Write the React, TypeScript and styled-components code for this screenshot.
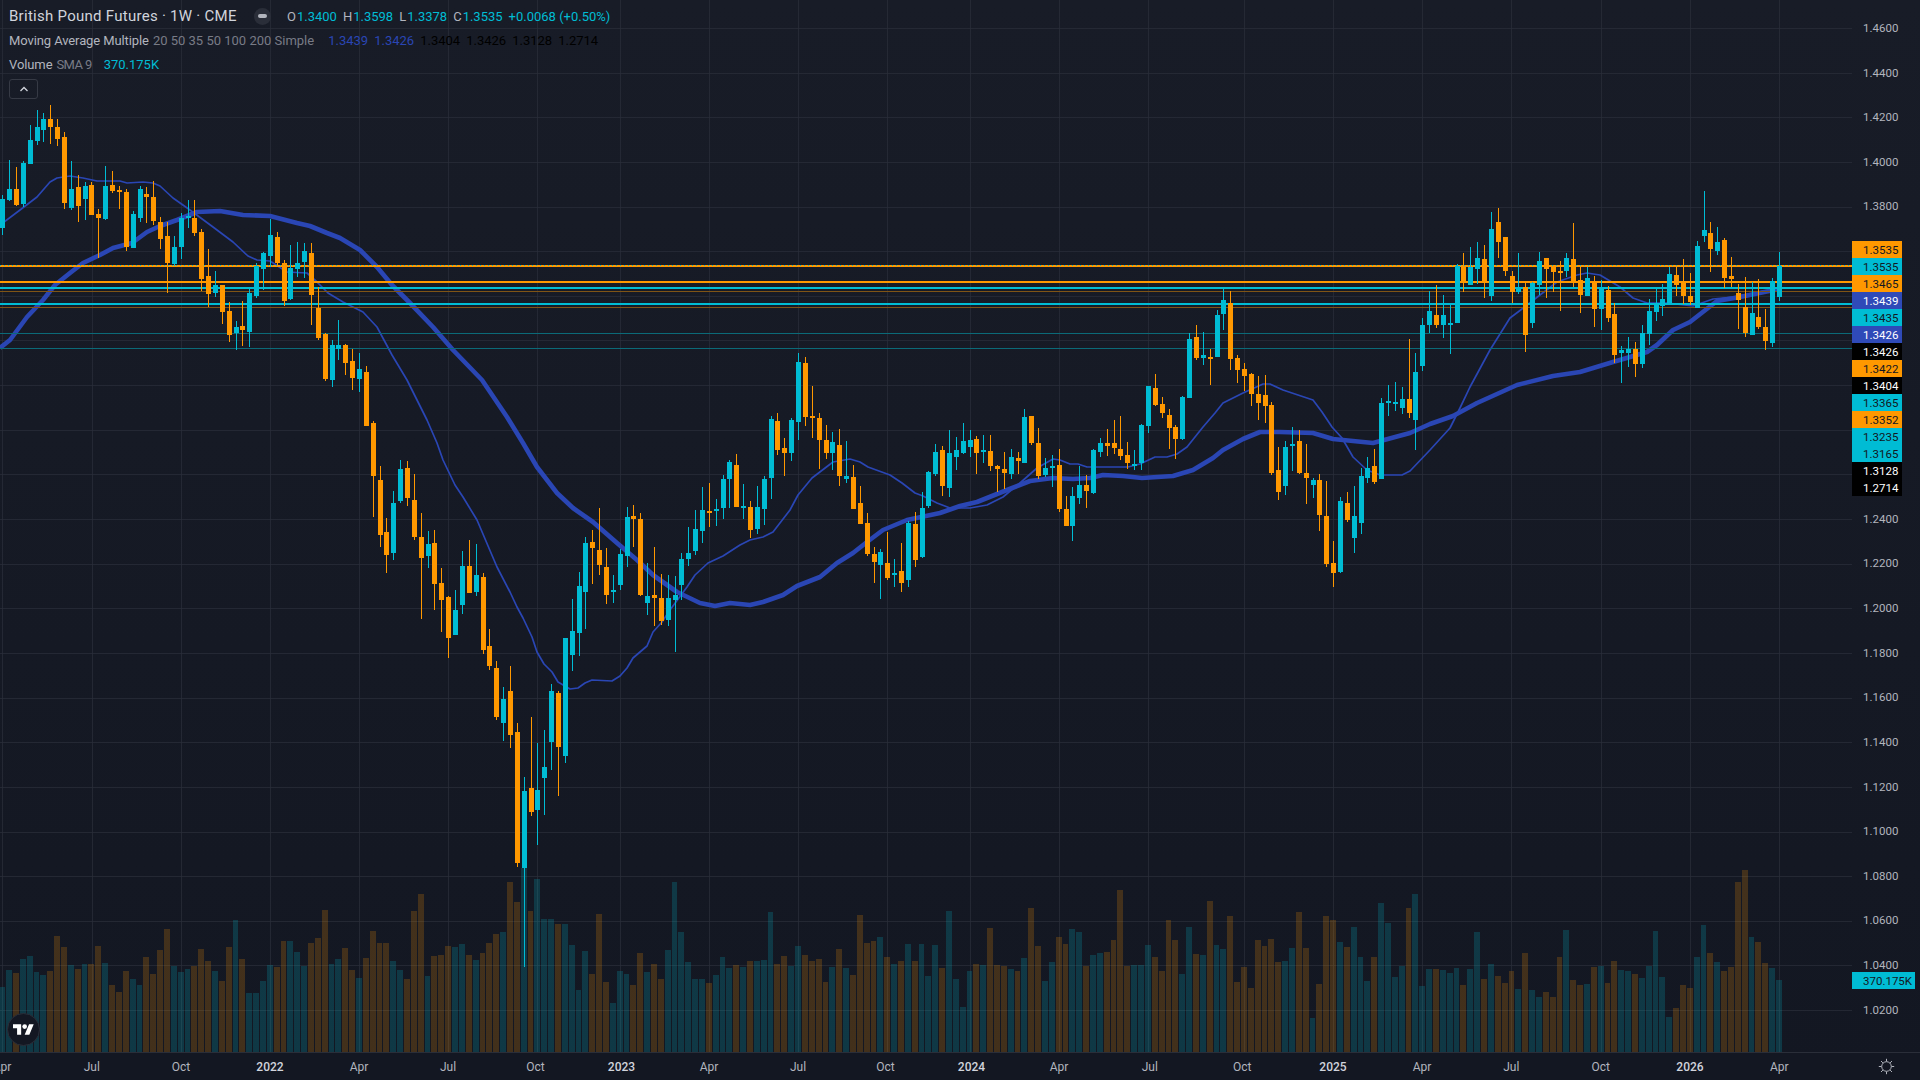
import styled, { createGlobalStyle } from "styled-components";

const CYAN = "#00bcd4";
const ORANGE = "#ff9800";
const BLUE = "#2a46b4";

type Row = [number, number, number, number, number];

// candle values read as pixels at 3x, y0 is where that crop starts
const seg = (y0: number, rows: Row[]) =>
  rows.map(([h, t, b, l, up]) => ({
    high: y0 + h / 3,
    top: y0 + t / 3,
    bottom: y0 + b / 3,
    low: y0 + l / 3,
    up: up === 1,
  }));

const candles = [
  ...seg(100, [
    [285,297,384,405,1],[180,267,300,304,1],[201,267,315,318,0],[183,189,312,320,1],[75,120,192,192,1],
    [30,81,123,135,1],[39,57,90,126,1],[15,57,81,132,0],[57,81,117,138,0],[96,111,309,326,0],
    [183,267,324,330,1],[225,261,318,366,0],[246,258,297,360,1],[246,255,345,345,0],[327,342,354,474,0],
    [198,258,357,360,1],[213,255,273,279,0],[258,270,276,327,0],[267,276,441,453,0],[333,342,444,444,1],
    [258,267,354,366,1],[261,282,291,369,0],[243,291,363,375,0],[351,366,417,447,0],[366,408,489,579,0],
    [408,441,492,498,1],[339,354,441,477,1],[300,348,354,384,1],[300,354,399,408,0],[387,396,537,573,0],
    [447,528,582,621,0],[513,555,579,591,1],[555,555,636,672,0],[606,633,705,726,0],[663,681,699,750,1],
    [603,678,690,738,0],[567,579,696,741,1],[489,498,588,594,1],[456,459,507,570,1],[357,405,468,501,1],
    [396,411,489,495,0],[480,489,603,618,0],[435,504,597,600,1],[426,489,507,531,1],[429,453,486,534,1],
    [429,459,585,675,0],[561,624,714,720,0],[699,702,837,843,0],[720,735,840,861,1],[660,735,747,780,1],
    [732,735,789,825,0],[747,783,834,870,0],[759,807,837,876,1],[798,816,978,978,0],
  ]),
  ...seg(380, [
    [123,129,288,411,0],[258,300,465,501,0],[414,456,525,579,0],[333,369,519,540,1],[240,267,363,369,1],
    [243,264,354,378,0],[282,360,471,480,0],[399,471,534,717,0],[453,492,528,564,1],[450,489,612,690,0],
    [564,609,660,756,0],[648,651,774,834,0],[630,690,765,765,1],[513,558,675,702,1],[480,558,639,639,0],
    [492,585,636,648,1],[579,591,810,822,0],[747,798,858,870,0],[843,864,1011,1020,0],
  ]),
  ...seg(660, [
    [81,117,189,243,1],[18,93,225,264,0],[189,216,609,621,0],[351,393,624,921,1],[171,384,456,468,0],
    [249,390,450,555,1],[210,321,354,465,1],[72,93,246,330,1],[93,99,261,408,0],[-66,-66,288,309,1],
  ]),
  ...seg(380, [
    [657,753,825,873,1],[576,618,759,828,1],[471,489,636,747,1],[450,486,504,612,0],[384,510,555,585,0],
    [504,561,645,672,0],[585,630,636,669,1],[507,522,615,630,1],[381,411,528,561,1],[375,408,417,501,0],
    [399,417,645,648,0],[549,648,669,705,1],[501,645,654,738,0],[582,654,723,735,0],[585,654,720,738,1],
    [588,645,660,816,1],[519,537,615,660,1],[441,519,537,558,1],[390,447,513,525,1],[321,390,453,489,1],
    [309,393,399,441,0],[357,387,393,438,1],[285,297,384,417,1],[240,246,297,384,1],[222,255,381,381,0],
    [312,378,384,417,1],[363,381,450,474,0],[318,381,447,462,1],
  ]),
  ...seg(340, [
    [408,417,507,555,1],[228,237,414,477,1],[219,243,330,345,0],[294,324,339,408,0],[234,240,339,363,1],
    [39,66,246,300,1],[51,69,231,258,0],[138,228,231,294,0],[219,234,300,387,0],[255,300,339,357,0],
    [276,306,339,390,1],[267,315,408,438,0],[303,408,417,429,1],[375,411,507,507,0],[438,489,552,552,0],
    [519,549,642,648,0],[621,642,666,729,0],[627,636,675,777,1],[576,669,714,720,0],[657,699,705,741,1],
    [609,693,729,756,0],[543,549,720,741,1],[516,552,660,681,0],[456,504,651,654,1],[393,396,498,504,1],
    [312,336,402,408,1],[318,330,438,468,0],[270,339,444,471,1],[291,330,351,390,1],[249,303,339,342,1],
    [270,300,321,351,1],[288,297,339,402,0],[285,330,336,369,1],[285,333,378,393,0],[375,378,387,456,0],
    [336,387,399,447,0],[327,351,402,417,1],[336,354,363,402,0],[207,231,369,369,1],[228,228,309,315,0],
    [264,309,408,417,0],[354,384,405,411,1],[345,378,381,441,1],[327,375,507,516,0],[468,507,558,558,0],
    [441,468,558,603,1],[378,435,474,492,1],[405,435,453,504,0],[327,330,459,462,1],[294,309,336,351,1],
    [267,309,318,348,0],[240,309,324,342,0],[228,327,348,360,0],[306,345,369,387,0],[330,372,375,390,1],
    [252,255,369,390,1],[138,138,258,279,1],[102,144,195,198,0],[171,192,219,234,0],[207,225,264,327,0],
    [255,261,297,357,0],[168,171,297,300,1],
  ]),
  ...seg(280, [
    [159,177,354,354,1],[135,171,234,240,0],[156,225,234,255,1],[207,231,237,315,0],[90,105,231,231,1],
    [27,60,102,150,1],[33,69,237,270,0],[225,234,270,309,0],[249,267,288,333,0],[279,282,342,378,0],
    [288,342,369,420,0],[285,345,378,429,0],[366,375,579,585,0],[501,570,636,660,0],[483,501,618,645,1],
    [441,492,498,573,1],[450,483,579,582,0],[492,579,594,672,0],[594,600,615,654,1],[582,600,705,753,0],
    [603,708,852,861,0],[783,849,879,921,0],[651,663,876,879,1],[636,669,720,726,0],[618,708,774,819,1],
    [564,588,729,762,1],[531,564,594,609,1],[507,558,606,612,0],[354,369,597,597,1],[315,363,369,408,1],
    [306,366,369,393,1],[321,357,384,402,1],[177,357,399,414,0],[219,276,420,510,1],
  ]),
  ...seg(180, [
    [414,435,558,573,1],[333,393,435,459,1],[315,405,435,444,0],[345,405,435,474,1],[375,429,432,522,1],
    [252,258,429,429,1],[219,258,306,336,0],[201,261,315,315,1],[186,234,267,312,1],[195,237,306,354,0],
    [96,147,348,363,1],[84,126,186,234,0],[171,171,273,288,0],[273,288,336,369,0],[219,321,336,342,1],
    [309,321,465,516,0],[306,309,429,444,1],[216,243,315,345,1],[234,234,267,354,0],[261,261,276,336,0],
    [243,273,279,393,0],[219,234,273,291,1],[129,237,306,321,0],[258,300,345,399,0],[261,294,348,348,1],
    [288,306,387,441,0],[300,321,387,450,1],[318,330,414,426,0],[369,402,525,549,0],[498,510,519,609,1],
    [471,507,519,561,1],[486,507,552,591,0],[435,459,552,564,1],[357,393,462,495,1],[324,372,396,423,1],
    [312,357,378,408,1],[261,282,369,375,1],[261,285,315,348,0],[237,306,348,372,0],[279,348,366,375,0],
    [183,198,384,384,1],[33,150,168,186,1],[126,159,207,276,0],[141,186,213,225,1],[174,180,294,324,0],
    [231,288,297,321,0],[312,339,360,447,0],[291,381,459,471,0],[306,399,465,465,1],[297,411,441,447,0],
    [387,441,483,510,0],[294,303,489,501,1],[216,258,351,363,1],
  ]),
];

// top of every volume bar, 3x from y 860
const volumes = [
  381,330,339,297,288,336,345,333,228,261,315,327,312,312,258,309,375,396,333,357,
  375,291,342,270,207,318,336,327,318,267,303,333,363,261,180,297,399,399,363,315,
  321,243,243,276,318,249,234,150,312,297,264,330,354,294,213,249,249,303,330,357,
  153,102,348,288,285,258,261,252,285,300,279,249,222,216,66,126,24,153,57,177,
  177,192,192,255,390,273,342,162,366,429,333,342,375,279,336,312,357,270,66,216,
  306,357,357,369,345,291,324,315,321,303,303,300,156,312,288,318,258,285,303,297,
  366,321,267,324,345,165,249,243,231,291,312,303,252,303,252,348,255,324,153,357,
  441,333,312,315,204,315,318,327,333,294,144,258,363,306,231,252,207,216,318,285,
  279,276,240,90,318,315,315,255,291,333,180,240,342,201,282,285,123,255,267,168,
  366,321,384,240,258,237,306,303,264,156,264,474,372,168,180,246,261,201,291,363,
  291,129,189,351,318,144,102,378,327,327,330,339,324,375,327,216,357,312,348,369,
  333,387,279,390,411,396,411,291,210,360,375,372,321,318,369,303,330,333,342,354,
  318,213,351,471,444,375,384,291,195,279,306,333,321,66,30,231,246,309,324,360,
];

const thinMa = [
  [0,225],[20,210],[37,197],[50,182],[57,178],[70,176],[83,178],[97,181],[112,181],[120,181],[127,183],[143,182],
  [153,183],[160,186],[173,198],[190,210],[213,227],[233,242],[248,256],[257,260],[270,261],[287,272],[307,273],
  [317,282],[328,293],[343,302],[363,312],[377,327],[392,355],[407,380],[427,420],[437,443],[443,460],[455,485],
  [463,497],[477,520],[497,567],[510,592],[517,607],[523,618],[532,637],[537,652],[544,664],[552,672],[558,682],
  [570,689],[578,688],[585,683],[592,680],[612,681],[620,676],[627,668],[633,658],[640,652],[647,646],[653,632],
  [662,622],[670,610],[687,587],[695,575],[708,563],[723,556],[740,545],[750,540],[763,537],[773,532],[790,510],
  [798,495],[812,478],[833,462],[850,459],[860,462],[868,467],[890,475],[902,483],[915,493],[923,496],[937,503],
  [950,508],[970,508],[987,505],[1003,497],[1020,483],[1037,468],[1053,459],[1060,460],[1070,464],[1078,464],
  [1087,467],[1128,467],[1140,464],[1155,457],[1167,457],[1177,454],[1187,447],[1203,427],[1215,413],[1223,403],
  [1243,393],[1263,384],[1270,384],[1283,390],[1313,400],[1322,412],[1332,427],[1342,438],[1353,457],[1367,470],
  [1380,475],[1402,475],[1410,471],[1430,450],[1450,428],[1460,408],[1470,387],[1490,350],[1510,318],[1518,312],
  [1540,295],[1557,282],[1577,275],[1587,273],[1600,275],[1620,287],[1633,298],[1647,303],[1667,303],[1693,306],
  [1713,299],[1733,297],[1779,288],
];

const thickMa = [
  [0,348],[10,340],[27,317],[43,300],[55,285],[70,273],[83,263],[100,255],[113,248],[132,243],[147,232],[160,226],
  [177,220],[197,212],[220,211],[243,215],[270,216],[297,223],[310,226],[327,233],[340,238],[360,250],[377,267],
  [392,285],[410,303],[433,327],[453,350],[482,380],[507,417],[523,443],[537,467],[557,493],[573,508],[593,522],
  [617,543],[637,560],[653,575],[677,592],[700,603],[715,606],[730,603],[750,605],[763,602],[783,595],[797,586],
  [820,577],[837,563],[853,553],[867,542],[883,530],[907,520],[940,513],[960,506],[977,502],[1007,490],[1030,481],
  [1053,478],[1073,479],[1090,478],[1103,475],[1123,476],[1142,478],[1173,476],[1193,470],[1213,458],[1223,450],
  [1243,439],[1260,432],[1280,432],[1313,433],[1333,439],[1373,443],[1410,433],[1430,424],[1453,416],[1477,403],
  [1517,385],[1553,376],[1580,372],[1613,362],[1647,352],[1657,345],[1673,330],[1690,322],[1717,301],[1740,297],
  [1779,289],
];

const priceTicks = Array.from({ length: 23 }, (_, i) => (1.46 - i * 0.02).toFixed(4));
const priceY = (p: number) => 28 + (1.46 - p) * 2232;

const timeTicks: [number, string][] = [
  [2,"Apr"],[92,"Jul"],[181,"Oct"],[270,"2022"],[359,"Apr"],[448,"Jul"],[537,"Oct"],[620,"2023"],[709,"Apr"],
  [798,"Jul"],[887,"Oct"],[970,"2024"],[1059,"Apr"],[1148,"Jul"],[1244,"Oct"],[1333,"2025"],[1422,"Apr"],
  [1511,"Jul"],[1601,"Oct"],[1690,"2026"],[1779,"Apr"],
];

const levels = [
  { y: 266, color: ORANGE, w: 2 },
  { y: 282, color: ORANGE, w: 2 },
  { y: 288, color: CYAN, w: 2 },
  { y: 291.5, color: "#7f5415", w: 1 },
  { y: 304, color: CYAN, w: 2 },
  { y: 307.5, color: "#7f5415", w: 1 },
  { y: 333.5, color: "#0b6a78", w: 1 },
  { y: 348.5, color: "#0b6a78", w: 1 },
];

const pillColors = {
  orange: { bg: ORANGE, fg: "#131722" },
  cyan: { bg: CYAN, fg: "#131722" },
  blue: { bg: "#2f4ab8", fg: "#ffffff" },
  black: { bg: "#000000", fg: "#ffffff" },
};

const pills: { text: string; kind: keyof typeof pillColors }[] = [
  { text: "1.3535", kind: "orange" },
  { text: "1.3535", kind: "cyan" },
  { text: "1.3465", kind: "orange" },
  { text: "1.3439", kind: "blue" },
  { text: "1.3435", kind: "cyan" },
  { text: "1.3426", kind: "blue" },
  { text: "1.3426", kind: "black" },
  { text: "1.3422", kind: "orange" },
  { text: "1.3404", kind: "black" },
  { text: "1.3365", kind: "cyan" },
  { text: "1.3352", kind: "orange" },
  { text: "1.3235", kind: "cyan" },
  { text: "1.3165", kind: "cyan" },
  { text: "1.3128", kind: "black" },
  { text: "1.2714", kind: "black" },
];

// the pills sit on top of these scale prices
const coveredByPills = (p: string) => Number(p) <= 1.36 && Number(p) >= 1.26;

const centerX = (i: number) => 2.3 + 6.86 * i;
const toPoints = (pts: number[][]) => pts.map((p) => p.join(",")).join(" ");

const GlobalStyle = createGlobalStyle`
  html, body {
    margin: 0;
    padding: 0;
    background: #131722;
    overflow: hidden;
  }
`;

const Page = styled.div`
  width: 1920px;
  height: 1080px;
  display: grid;
  grid-template-columns: 1852px 68px;
  grid-template-rows: 1052px 28px;
  background: linear-gradient(#181c27, #131722);
  color: #b2b5be;
  font-family: Roboto, "Liberation Sans", sans-serif;
  overflow: hidden;
`;

const ChartPane = styled.div`
  position: relative;
  overflow: hidden;
`;

const ChartCanvas = styled.svg`
  display: block;
`;

const Legend = styled.div`
  position: absolute;
  top: 4px;
  left: 9px;
  display: flex;
  flex-direction: column;
`;

const LegendRow = styled.div`
  height: 24px;
  display: flex;
  align-items: center;
  white-space: nowrap;
  font-size: 13px;
`;

const Title = styled.span`
  width: 240px;
  font-size: 15px;
  color: #d1d4dc;
  letter-spacing: 0.27px;
`;

const MarketDot = styled.span`
  width: 17px;
  height: 17px;
  margin-left: 5px;
  margin-right: 16px;
  border-radius: 50%;
  background: #2a2e39;
  display: flex;
  align-items: center;
  justify-content: center;
  &::after {
    content: "";
    width: 9px;
    height: 4px;
    border-radius: 2px;
    background: #b2b5be;
  }
`;

const OhlcItem = styled.span`
  margin-right: 6px;
  color: #b2b5be;
  b {
    font-weight: 400;
    color: ${CYAN};
    margin-left: 1px;
  }
`;

const Change = styled.span`
  color: ${CYAN};
`;

const StudyName = styled.span`
  color: #b2b5be;
  margin-right: 4px;
  letter-spacing: -0.1px;
`;

const StudyArgs = styled.span<{ $gap: number; $tight?: boolean }>`
  color: #787b86;
  margin-right: ${(p) => p.$gap}px;
  letter-spacing: ${(p) => (p.$tight ? "-0.6px" : "0")};
`;

const StudyValue = styled.span<{ $color: string }>`
  color: ${(p) => p.$color};
  width: 46px;
`;

const CollapseButton = styled.div`
  margin-top: 3px;
  width: 29px;
  height: 20px;
  box-sizing: border-box;
  border: 1px solid #363a45;
  border-radius: 3px;
  display: flex;
  align-items: center;
  justify-content: center;
`;

const LogoBadge = styled.div`
  position: absolute;
  left: 7px;
  bottom: 6px;
  width: 33px;
  height: 33px;
  box-sizing: border-box;
  border: 1px solid #2a2e39;
  border-radius: 50%;
  background: #131722;
  display: flex;
  align-items: center;
  justify-content: center;
`;

const PriceAxis = styled.div`
  position: relative;
  padding-top: 5.68px;
  font-size: 11.5px;
  color: #b2b5be;
`;

const PriceTick = styled.div`
  height: 44.64px;
  padding-left: 11px;
  display: flex;
  align-items: center;
`;

const PillStack = styled.div`
  position: absolute;
  top: 241px;
  left: 0;
  display: flex;
  flex-direction: column;
`;

const Pill = styled.div<{ $bg: string; $fg: string }>`
  width: 50px;
  height: 17px;
  padding-left: 11px;
  box-sizing: border-box;
  display: flex;
  align-items: center;
  background: ${(p) => p.$bg};
  color: ${(p) => p.$fg};
`;

const VolumePill = styled(Pill)`
  position: absolute;
  top: 972px;
  left: 0;
  width: 63px;
`;

const TimeAxis = styled.div`
  display: flex;
  align-items: center;
  overflow: hidden;
  box-sizing: border-box;
  border-top: 1px solid #2a2e39;
  background: #131722;
`;

const TimeRow = styled.div`
  display: flex;
`;

const TimeTick = styled.span<{ $year: boolean }>`
  flex: none;
  text-align: center;
  font-size: 12px;
  font-weight: ${(p) => (p.$year ? 500 : 400)};
  color: ${(p) => (p.$year ? "#d1d4dc" : "#b2b5be")};
`;

const Corner = styled.div`
  box-sizing: border-box;
  border-top: 1px solid #2a2e39;
  background: #131722;
  display: flex;
  align-items: center;
  justify-content: center;
`;

const ChartDrawing = () => (
  <ChartCanvas width={1852} height={1052}>
    {/* grid */}
    {priceTicks.map((t) => {
      const y = Math.round(priceY(Number(t))) + 0.5;
      return <line key={t} x1={0} x2={1852} y1={y} y2={y} stroke="#2a2e39" strokeOpacity={0.75} />;
    })}
    {timeTicks.map(([x], i) => (
      <line key={i} x1={x + 0.5} x2={x + 0.5} y1={0} y2={1052} stroke="#2a2e39" strokeOpacity={0.75} />
    ))}

    {/* volume */}
    {volumes.map((v, i) => {
      const top = Math.round(860 + v / 3);
      const left = Math.round(centerX(i) - 3);
      const nextLeft = Math.round(centerX(i + 1) - 3);
      return (
        <rect
          key={i}
          x={left}
          y={top}
          width={Math.min(6, nextLeft - left - 1)}
          height={1052 - top}
          fill={candles[i].up ? CYAN : ORANGE}
          fillOpacity={0.2}
          shapeRendering="crispEdges"
        />
      );
    })}

    {/* moving averages */}
    <polyline points={toPoints(thinMa)} fill="none" stroke={BLUE} strokeWidth={1.7} strokeLinejoin="round" />
    <polyline points={toPoints(thickMa)} fill="none" stroke={BLUE} strokeWidth={4.6} strokeLinejoin="round" />

    {/* levels */}
    {levels.map((l) => (
      <line key={l.y} x1={0} x2={1852} y1={l.y} y2={l.y} stroke={l.color} strokeWidth={l.w} shapeRendering="crispEdges" />
    ))}
    <line x1={0} x2={1852} y1={265.5} y2={265.5} stroke={CYAN} strokeWidth={1} strokeDasharray="1 3" shapeRendering="crispEdges" />

    {/* candles */}
    {candles.map((c, i) => {
      const x = Math.round(centerX(i));
      const color = c.up ? CYAN : ORANGE;
      const top = Math.round(c.top);
      return (
        <g key={i} fill={color} shapeRendering="crispEdges">
          <rect x={x} y={Math.round(c.high)} width={1} height={Math.max(1, Math.round(c.low) - Math.round(c.high))} />
          <rect x={x - 2} y={top} width={5} height={Math.max(2, Math.round(c.bottom) - top)} />
        </g>
      );
    })}
  </ChartCanvas>
);

const TimeLabels = () => {
  const half = 45;
  return (
    <TimeAxis>
      <TimeRow style={{ marginLeft: timeTicks[0][0] - half }}>
        {timeTicks.map(([x, label], i) => {
          const prev = i > 0 ? timeTicks[i - 1][0] : x - half * 2;
          const next = i < timeTicks.length - 1 ? timeTicks[i + 1][0] : x + half * 2;
          return (
            <TimeTick key={i} $year={/^\d/.test(label)} style={{ width: (next - prev) / 2 }}>
              {label}
            </TimeTick>
          );
        })}
      </TimeRow>
    </TimeAxis>
  );
};

export default function App() {
  return (
    <>
      <GlobalStyle />
      <Page>
        <ChartPane>
          <ChartDrawing />
          <Legend>
            <LegendRow>
              <Title>British Pound Futures · 1W · CME</Title>
              <MarketDot />
              <OhlcItem>O<b>1.3400</b></OhlcItem>
              <OhlcItem>H<b>1.3598</b></OhlcItem>
              <OhlcItem>L<b>1.3378</b></OhlcItem>
              <OhlcItem>C<b>1.3535</b></OhlcItem>
              <Change>+0.0068 (+0.50%)</Change>
            </LegendRow>
            <LegendRow>
              <StudyName>Moving Average Multiple</StudyName>
              <StudyArgs $gap={14}>20 50 35 50 100 200 Simple</StudyArgs>
              <StudyValue $color={BLUE}>1.3439</StudyValue>
              <StudyValue $color={BLUE}>1.3426</StudyValue>
              <StudyValue $color="#000000">1.3404</StudyValue>
              <StudyValue $color="#000000">1.3426</StudyValue>
              <StudyValue $color="#000000">1.3128</StudyValue>
              <StudyValue $color="#000000">1.2714</StudyValue>
            </LegendRow>
            <LegendRow>
              <StudyName>Volume</StudyName>
              <StudyArgs $gap={12} $tight>SMA 9</StudyArgs>
              <StudyValue $color={CYAN}>370.175K</StudyValue>
            </LegendRow>
            <CollapseButton>
              <svg width="10" height="6" viewBox="0 0 10 6" fill="none">
                <path d="M1.5 5 5 1.5 8.5 5" stroke="#d1d4dc" strokeWidth="1.3" />
              </svg>
            </CollapseButton>
          </Legend>
          <LogoBadge>
            <svg width="21" height="11" viewBox="0 4 36 18" fill="#ffffff">
              <path d="M14 22H7V11H0V4h14v18zM28 22h-8l7.5-18h8L28 22z" />
              <circle cx="20" cy="8" r="4" />
            </svg>
          </LogoBadge>
        </ChartPane>
        <PriceAxis>
          {priceTicks.map((t) => (
            <PriceTick key={t}>{coveredByPills(t) ? null : t}</PriceTick>
          ))}
          <PillStack>
            {pills.map((p, i) => (
              <Pill key={i} $bg={pillColors[p.kind].bg} $fg={pillColors[p.kind].fg}>
                {p.text}
              </Pill>
            ))}
          </PillStack>
          <VolumePill $bg={CYAN} $fg="#131722">370.175K</VolumePill>
        </PriceAxis>
        <TimeLabels />
        <Corner>
          <svg width="17" height="17" viewBox="0 0 17 17" fill="none" stroke="#b2b5be" strokeWidth="1">
            <circle cx="8.5" cy="8.5" r="4.8" />
            <path d="M8.5 .8v2.6M8.5 13.6v2.6M.8 8.5h2.6M13.6 8.5h2.6M3 3l1.9 1.9M12.1 12.1 14 14M14 3l-1.9 1.9M4.9 12.1 3 14" />
          </svg>
        </Corner>
      </Page>
    </>
  );
}
